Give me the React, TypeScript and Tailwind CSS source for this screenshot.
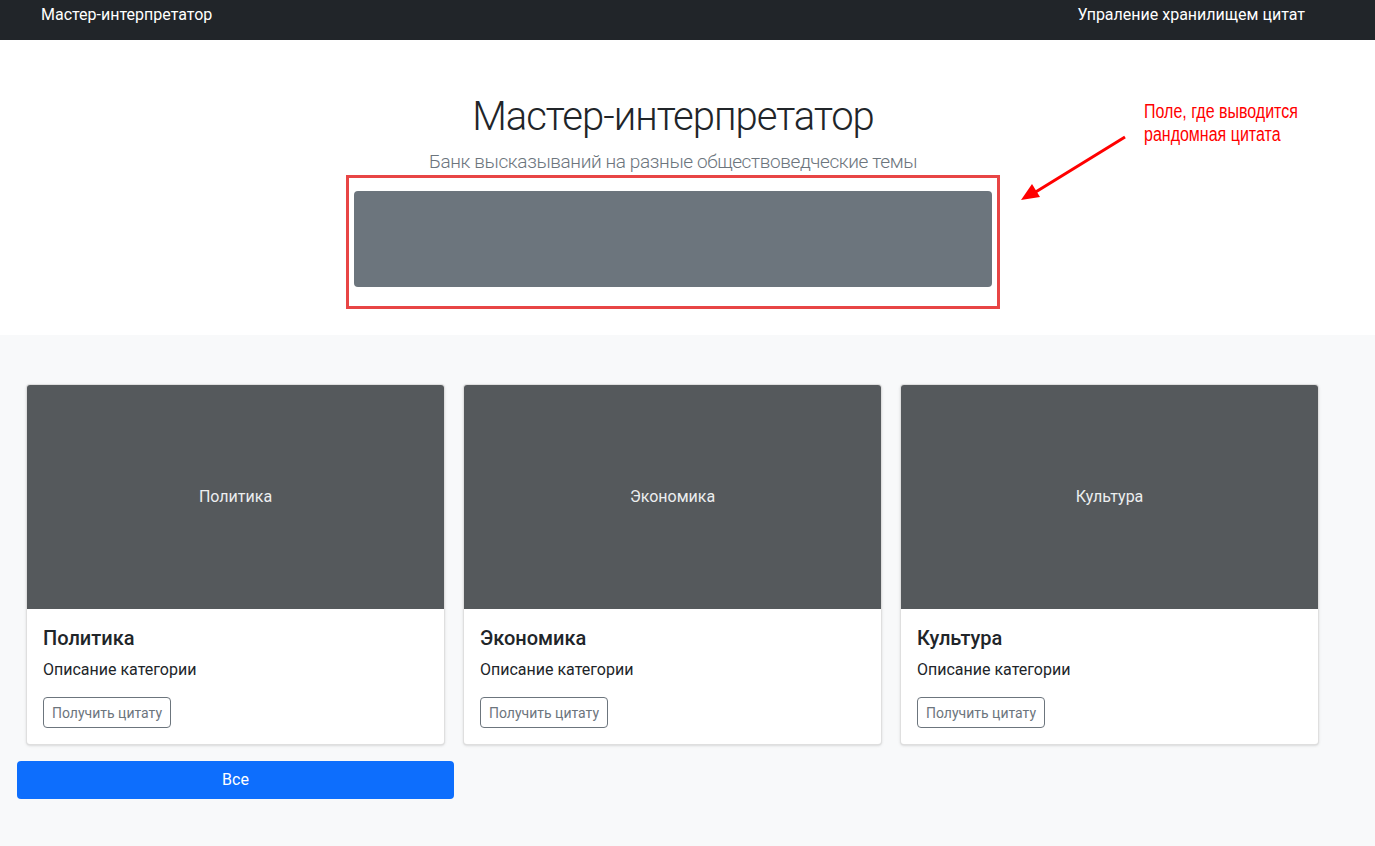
const categories = ["Политика", "Экономика", "Культура"];

function CategoryCard({ name }: { name: string }) {
  return (
    <div className="px-[9px]">
      <div className="bg-white border border-black/[0.125] rounded shadow-sm overflow-hidden">
        <div className="h-[224px] bg-[#55595c] flex items-center justify-center text-[#eceeef] text-base">
          {name}
        </div>
        <div className="px-4 pt-[17px] pb-4">
          <h5 className="text-xl font-medium text-[#212529] leading-[1.2] mb-[8px]">{name}</h5>
          <p className="text-base text-[#212529] leading-6 mb-[15px]">Описание категории</p>
          <button className="h-[31px] px-2 text-sm text-[#6c757d] border border-[#6c757d] rounded">
            Получить цитату
          </button>
        </div>
      </div>
    </div>
  );
}

export default function App() {
  return (
    <div className="relative min-h-[846px] bg-[#f8f9fa]" style={{ fontFamily: 'Roboto, "Noto Sans", sans-serif' }}>
      {/* navbar */}
      <header className="h-[40px] bg-[#212529] shadow-sm">
        <div className="w-[1346px] flex justify-between pl-[41px] pr-[41px] pt-[3px] text-white text-base">
          <span>Мастер-интерпретатор</span>
          <span>Упраление хранилищем цитат</span>
        </div>
      </header>

      {/* hero */}
      <section className="bg-white h-[295px]">
        <div className="w-[1346px] flex flex-col items-center pt-[53px]">
          <h1 className="text-[40px] font-light tracking-[-0.025em] text-[#212529] leading-[1.2]">Мастер-интерпретатор</h1>
          <p className="text-[19px] font-light tracking-[-0.02em] text-[#6c757d] mt-[8px] leading-[1.4]">
            Банк высказываний на разные обществоведческие темы
          </p>
          <div className="-mt-[1px] w-[654px] h-[134px] border-[3px] border-[#e84545] px-[5px] pt-[13px]">
            <div className="h-[96px] bg-[#6c757d] rounded"></div>
          </div>
        </div>
      </section>

      {/* album */}
      <section className="pt-[49px] pb-[46px]">
        <div className="w-[1311px] ml-[17px]">
          <div className="grid grid-cols-3">
            {categories.map((c) => (
              <CategoryCard key={c} name={c} />
            ))}
          </div>
          <div className="grid grid-cols-3 mt-[16px]">
            <button className="h-[38px] bg-[#0d6efd] text-white text-base rounded">Все</button>
          </div>
        </div>
      </section>

      {/* annotation */}
      <div
        className="absolute left-[1144px] top-[100px] text-[20px] leading-[23px] text-[#ff0000] scale-x-[0.8] origin-left"
        style={{ fontFamily: '"Liberation Sans", sans-serif' }}
      >
        <div>Поле, где выводится</div>
        <div>рандомная цитата</div>
      </div>
      <svg className="absolute left-[1010px] top-[130px]" width="130" height="80" viewBox="0 0 130 80">
        <line x1="115" y1="7" x2="24" y2="63" stroke="#ff0000" strokeWidth="3" />
        <polygon points="11,70 22,54 30,67" fill="#ff0000" />
      </svg>
    </div>
  );
}
